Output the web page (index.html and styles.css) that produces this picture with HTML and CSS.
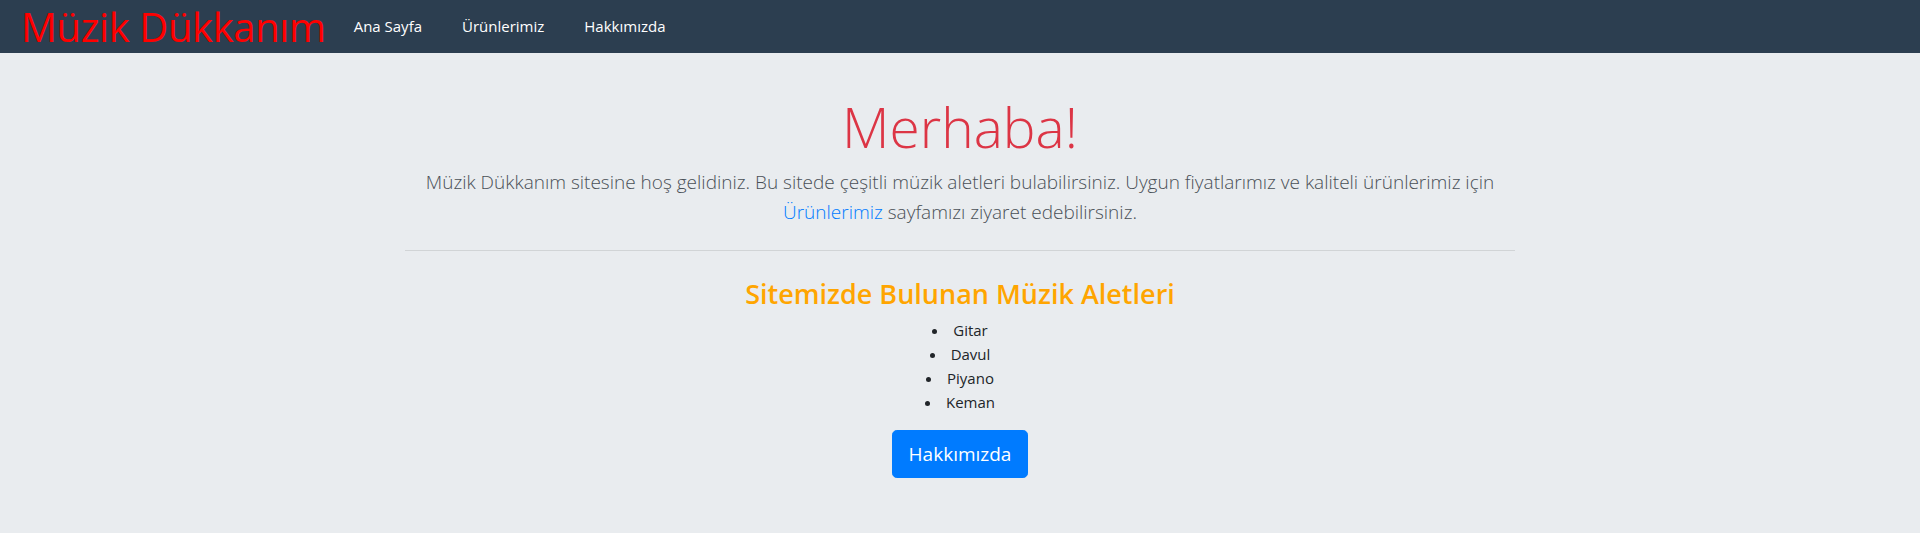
FILE: index.html
```html
<!DOCTYPE html>
<html lang="tr">
<head>
<meta charset="utf-8">
<title>Müzik Dükkanım</title>
<link rel="stylesheet" href="styles.css">
</head>
<body>
<nav class="navbar">
  <a class="brand" href="#">Müzik Dükkanım</a>
  <ul class="nav-links">
    <li><a href="#">Ana Sayfa</a></li>
    <li><a href="#">Ürünlerimiz</a></li>
    <li><a href="#">Hakkımızda</a></li>
  </ul>
</nav>
<main class="container">
  <h1 class="title">Merhaba!</h1>
  <p class="lead">Müzik Dükkanım sitesine hoş gelidiniz. Bu sitede çeşitli müzik aletleri bulabilirsiniz. Uygun fiyatlarımız ve kaliteli ürünlerimiz için<br><a href="#">Ürünlerimiz</a> sayfamızı ziyaret edebilirsiniz.</p>
  <hr class="divider">
  <h3 class="subtitle">Sitemizde Bulunan Müzik Aletleri</h3>
  <ul class="instruments">
    <li>Gitar</li>
    <li>Davul</li>
    <li>Piyano</li>
    <li>Keman</li>
  </ul>
  <a class="btn" href="#">Hakkımızda</a>
</main>
</body>
</html>
```
FILE: styles.css
```css
* { box-sizing: border-box; }
html, body { margin: 0; padding: 0; }
body {
  background: #e9ecef;
  font-family: "Open Sans", "Noto Sans", sans-serif;
  font-size: 16px;
  line-height: 1.5;
  color: #212529;
}
.navbar {
  height: 53px;
  background: #2c3e50;
  display: flex;
  align-items: center;
  padding: 0 16px 0 21px;
}
.brand {
  color: #ff0000;
  font-size: 40px;
  text-decoration: none;
  line-height: 1;
  margin-right: 8px;
  letter-spacing: -0.4px;
}
.nav-links {
  list-style: none;
  display: flex;
  margin: 0;
  padding: 0;
}
.nav-links a {
  display: block;
  color: #ffffff;
  text-decoration: none;
  font-size: 15px;
  padding: 8px 20px;
}
.container {
  width: 1140px;
  margin: 0 auto;
  padding: 40px 15px 0;
  text-align: center;
}
.title {
  margin: 0 0 8px;
  font-size: 55px;
  font-weight: 300;
  line-height: 1.22;
  color: #dc3545;
}
.lead {
  margin: 0;
  font-size: 19px;
  font-weight: 300;
  line-height: 1.55;
  color: #495057;
}
.lead a { color: #007bff; text-decoration: none; }
.divider {
  margin: 23px 0 27px;
  border: 0;
  border-top: 1px solid rgba(0,0,0,.1);
}
.subtitle {
  margin: 0 0 8px;
  font-size: 27px;
  font-weight: 600;
  line-height: 1.2;
  color: #ffa500;
}
.instruments {
  list-style: disc inside;
  margin: 0 0 16px;
  padding: 0;
  font-size: 15px;
  line-height: 24px;
}
.btn {
  display: inline-block;
  background: #007bff;
  color: #fff;
  text-decoration: none;
  font-size: 19px;
  line-height: 30px;
  padding: 8px 16px;
  border: 1px solid #007bff;
  border-radius: 4.8px;
}
```
